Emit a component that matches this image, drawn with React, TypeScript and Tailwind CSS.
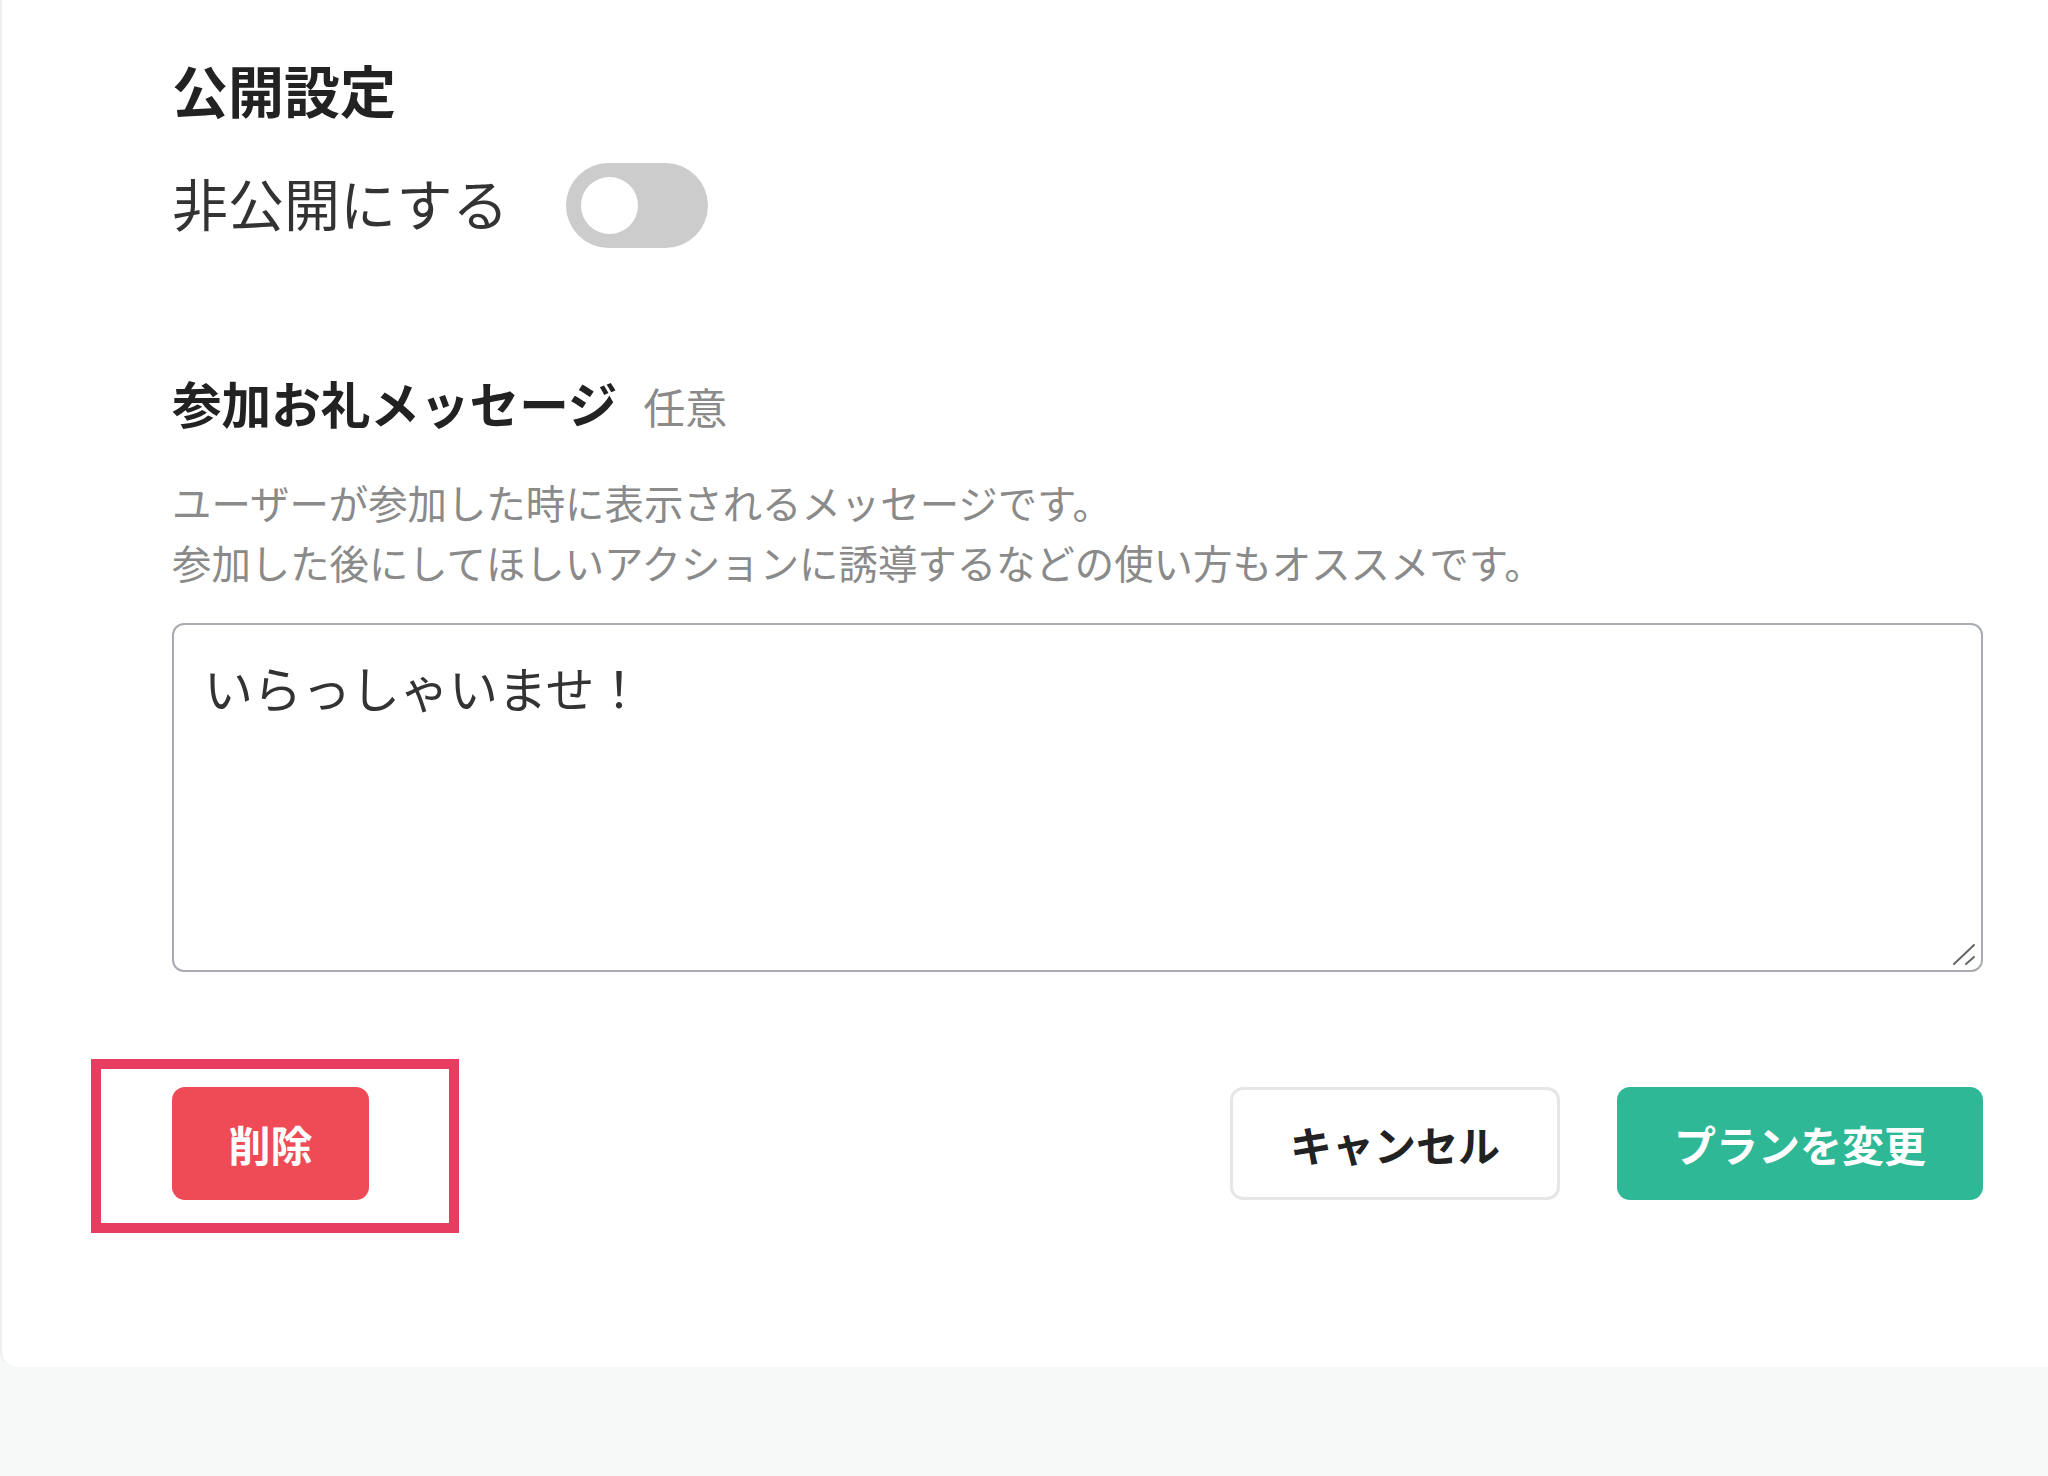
import { useState } from "react";

const font = { fontFamily: '"Noto Sans CJK JP", "Noto Sans", sans-serif' };

function Toggle({ on, onChange }: { on: boolean; onChange: (v: boolean) => void }) {
  return (
    <button
      type="button"
      role="switch"
      aria-checked={on}
      onClick={() => onChange(!on)}
      className={
        "relative h-[85px] w-[142px] shrink-0 rounded-full transition-colors " +
        (on ? "bg-[#2eb895]" : "bg-[#cccccc]")
      }
    >
      <span
        className={
          "absolute top-[14px] block h-[57px] w-[57px] rounded-full bg-white transition-all " +
          (on ? "left-[70px]" : "left-[15px]")
        }
      />
    </button>
  );
}

export default function App() {
  const [isPrivate, setIsPrivate] = useState(false);
  const [message, setMessage] = useState("いらっしゃいませ！");

  return (
    <div className="min-h-screen bg-[#f7f8f8]" style={font}>
      <div className="rounded-bl-[16px] border-l-2 border-[#eeeeee] bg-white pt-[49px] pb-[167px] pl-[170px] pr-[65px]">
        {/* 公開設定 */}
        <h2 className="text-[56px] leading-[80px] font-bold text-[#222222]">公開設定</h2>
        <div className="mt-[34px] flex items-center gap-[57px]">
          <span className="mb-[8px] text-[56px] leading-[77px] text-[#333333]">非公開にする</span>
          <Toggle on={isPrivate} onChange={setIsPrivate} />
        </div>

        {/* 参加お礼メッセージ */}
        <div className="mt-[122px] flex items-baseline gap-[26px]">
          <span className="text-[49.6px] leading-[64px] font-bold text-[#222222]">参加お礼メッセージ</span>
          <span className="text-[42px] leading-[64px] text-[#8a8a8a]">任意</span>
        </div>
        <p className="mt-[34px] text-[39.4px] leading-[60px] text-[#8a8a8a]">
          ユーザーが参加した時に表示されるメッセージです。
          <br />
          参加した後にしてほしいアクションに誘導するなどの使い方もオススメです。
        </p>

        <div className="relative mt-[31px]">
          <textarea
            value={message}
            onChange={(e) => setMessage(e.target.value)}
            className="block h-[349px] w-full resize-none rounded-[12px] border-2 border-[#a8abb1] pt-[26px] pl-[30px] pr-[30px] text-[49px] leading-[72px] text-[#333333] outline-none"
            style={font}
          />
          <svg
            className="pointer-events-none absolute right-[7px] bottom-[5px]"
            width="24"
            height="24"
            viewBox="0 0 24 24"
            fill="none"
            stroke="#666666"
            strokeWidth="2"
            strokeLinecap="round"
          >
            <line x1="2" y1="21" x2="22" y2="2" />
            <line x1="14" y1="21" x2="22" y2="14" />
          </svg>
        </div>

        {/* ボタン */}
        <div className="mt-[115px] flex items-center">
          <div className="relative">
            <button
              type="button"
              className="h-[113px] w-[197px] rounded-[13px] bg-[#ee4b57] text-[42px] font-bold text-white"
            >
              削除
            </button>
            <div className="pointer-events-none absolute top-[-28px] left-[-81px] h-[174px] w-[368px] border-[10px] border-[#e73d60]" />
          </div>
          <div className="ml-auto flex gap-[57px]">
            <button
              type="button"
              className="h-[113px] w-[330px] rounded-[13px] border-[3px] border-[#e6e6e6] bg-white text-[42px] font-bold text-[#222222]"
            >
              キャンセル
            </button>
            <button
              type="button"
              className="h-[113px] w-[366px] rounded-[13px] bg-[#2eb895] text-[42px] font-bold text-white"
            >
              プランを変更
            </button>
          </div>
        </div>
      </div>
    </div>
  );
}
